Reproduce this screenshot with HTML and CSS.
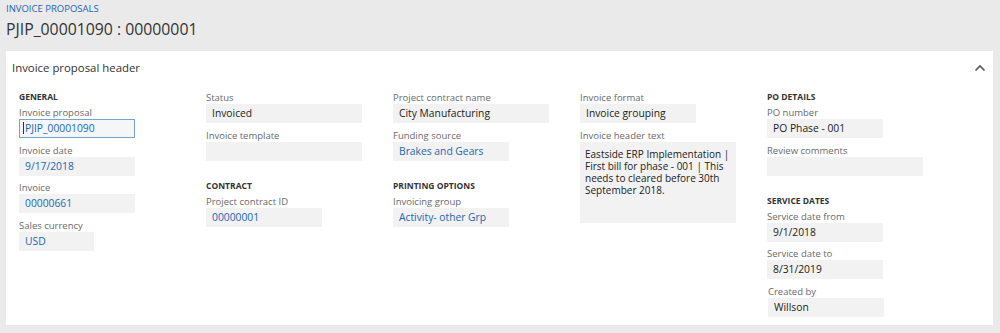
FILE: index.html
```html
<!DOCTYPE html>
<html lang="en">
<head>
  <meta charset="UTF-8">
  <title>Invoice proposal</title>
  <link rel="stylesheet" href="styles.css">
</head>
<body>

  <div class="page">
    <div class="crumb">INVOICE PROPOSALS</div>
    <h1 class="title">PJIP_00001090 : 00000001</h1>

    <section class="panel">
      <div class="panel-head">
        <span>Invoice proposal header</span>
        <svg class="chevron" width="12" height="8" viewBox="0 0 12 8">
          <path d="M1.5 6.5 L6 2 L10.5 6.5" fill="none" stroke="#555" stroke-width="1.6"/>
        </svg>
      </div>

      <div class="cols">
        <div class="col">
          <div class="group">GENERAL</div>
          <div class="field">
            <div class="label">Invoice proposal</div>
            <div class="box short focus link"><span class="caret"></span>PJIP_00001090</div>
          </div>
          <div class="field">
            <div class="label">Invoice date</div>
            <div class="box short link">9/17/2018</div>
          </div>
          <div class="field">
            <div class="label">Invoice</div>
            <div class="box short link">00000661</div>
          </div>
          <div class="field">
            <div class="label">Sales currency</div>
            <div class="box tiny link">USD</div>
          </div>
        </div>

        <div class="col">
          <div class="field">
            <div class="label">Status</div>
            <div class="box wide">Invoiced</div>
          </div>
          <div class="field">
            <div class="label">Invoice template</div>
            <div class="box wide"></div>
          </div>
          <div class="group spaced">CONTRACT</div>
          <div class="field">
            <div class="label">Project contract ID</div>
            <div class="box short link">00000001</div>
          </div>
        </div>

        <div class="col">
          <div class="field">
            <div class="label">Project contract name</div>
            <div class="box wide">City Manufacturing</div>
          </div>
          <div class="field">
            <div class="label">Funding source</div>
            <div class="box short link">Brakes and Gears</div>
          </div>
          <div class="group spaced">PRINTING OPTIONS</div>
          <div class="field">
            <div class="label">Invoicing group</div>
            <div class="box short link">Activity- other Grp</div>
          </div>
        </div>

        <div class="col">
          <div class="field">
            <div class="label">Invoice format</div>
            <div class="box short">Invoice grouping</div>
          </div>
          <div class="field">
            <div class="label">Invoice header text</div>
            <div class="box wide memo">Eastside ERP Implementation | First bill for phase - 001 | This needs to cleared before 30th September 2018.</div>
          </div>
        </div>

        <div class="col">
          <div class="group">PO DETAILS</div>
          <div class="field">
            <div class="label">PO number</div>
            <div class="box short">PO Phase - 001</div>
          </div>
          <div class="field">
            <div class="label">Review comments</div>
            <div class="box wide"></div>
          </div>
          <div class="group spaced">SERVICE DATES</div>
          <div class="field">
            <div class="label">Service date from</div>
            <div class="box short">9/1/2018</div>
          </div>
          <div class="field">
            <div class="label">Service date to</div>
            <div class="box short">8/31/2019</div>
          </div>
          <div class="field nudge">
            <div class="label">Created by</div>
            <div class="box short">Willson</div>
          </div>
        </div>
      </div>
    </section>
  </div>

</body>
</html>
```

FILE: styles.css
```css
body {
  margin: 0;
  background: #eaeaea;
  font-family: "Segoe UI", "Open Sans", sans-serif;
  color: #222;
}

.page {
  padding: 3px 7px 0 6px;
}

.crumb {
  font-size: 9.5px;
  line-height: 12px;
  color: #2266b5;
}

.title {
  margin: 3px 0 0;
  font-size: 15.8px;
  line-height: 22px;
  font-weight: 400;
  color: #333;
}

.panel {
  margin-top: 11px;
  background: #fff;
  height: 274px;
  box-sizing: border-box;
  padding: 8px 0 0;
}

.panel-head {
  display: flex;
  justify-content: space-between;
  align-items: center;
  padding: 0 7px 0 6px;
  font-size: 11.4px;
  line-height: 18px;
  color: #333;
}

.chevron {
  display: block;
}

.cols {
  display: grid;
  grid-template-columns: repeat(5, 187px);
  padding: 15px 0 0 13px;
}

.group {
  font-size: 8.5px;
  font-weight: 700;
  line-height: 10px;
  color: #333;
  margin-bottom: 5px;
}

.group.spaced {
  margin-top: 20px;
}

.field {
  margin-bottom: 6.5px;
}

.field.nudge {
  padding-left: 1px;
}

.label {
  font-size: 9.5px;
  line-height: 12px;
  color: #6a6a6a;
}

.box {
  box-sizing: border-box;
  height: 19px;
  padding: 0 6px;
  background: #f2f2f2;
  font-size: 10.3px;
  line-height: 19px;
  color: #222;
  white-space: nowrap;
}

.box.short {
  width: 116px;
}

.box.wide {
  width: 156px;
}

.box.tiny {
  width: 75px;
}

.box.link {
  color: #2266b5;
}

.box.focus {
  background: #f4f6f8;
  border: 1px solid #7aa2cf;
  line-height: 17px;
  padding-left: 3px;
}

.caret {
  display: inline-block;
  width: 1px;
  height: 12px;
  margin-right: 1px;
  background: #333;
  vertical-align: -2px;
}

.box.memo {
  height: 81px;
  padding: 6px 5px;
  white-space: normal;
  line-height: 12.3px;
  font-size: 10px;
}
```
